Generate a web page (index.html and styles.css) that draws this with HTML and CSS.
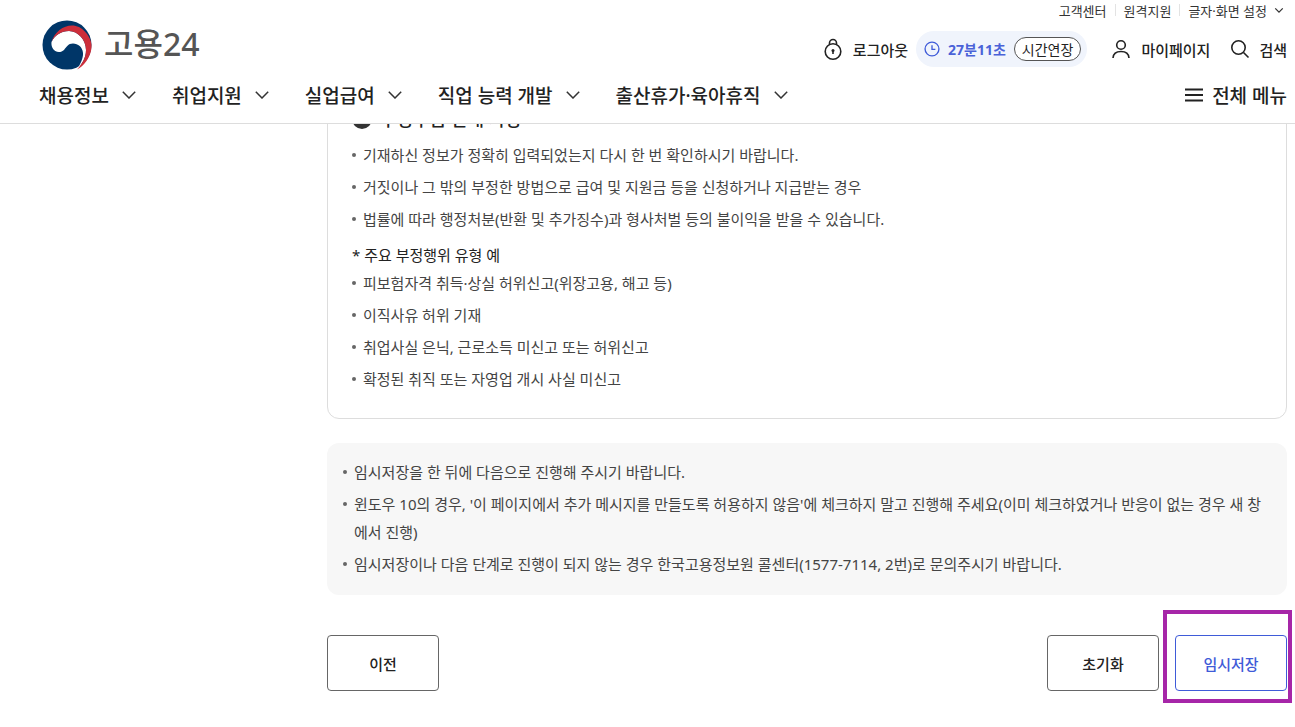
FILE: index.html
```html
<!DOCTYPE html>
<html lang="ko">
<head>
<meta charset="utf-8">
<title>고용24</title>
<link rel="stylesheet" href="styles.css">
</head>
<body>
<div class="page">
  <header class="header">
    <div class="util">
      <a>고객센터</a><i class="sep"></i><a>원격지원</a><i class="sep"></i><a>글자·화면 설정</a>
      <svg class="chev-s" viewBox="0 0 12 8"><path d="M1.500 1.500 6 6l4.500-4.500"/></svg>
    </div>
    <div class="brand-row">
      <div class="logo">
        <svg class="emblem" viewBox="0 0 50 50">
          <circle cx="25" cy="25" r="24.500" fill="#003668"/>
          <path d="M9.500 22C13 15 19 11 27 11c9 0 17 9 17 19 0 8-4 14-9 19.500 3-4.500 6.500-11.500 6-16.500-.5-6-5-9.500-10-9.500s-6.500 3.500-9 6.500c-3 3-9 3-11.500-2-1-2-1.200-4-1-6z" fill="#fff"/>
          <path d="M9.500 22C13 9 27 2 37 7c9 5 13 14 12.500 20-.5 10-7.500 19-14.500 22.500 5-5.500 9-11.500 9-19.500 0-10-8-19-17-19-8 0-14 4-17.500 11z" fill="#cd2e3a"/>
        </svg>
        <span class="logo-text">고용24</span>
      </div>
      <div class="actions">
        <a class="action">
          <svg class="icon" viewBox="0 0 20 24"><circle cx="10" cy="14.500" r="7.800"/><path d="M6.500 8V6a3.500 3.500 0 0 1 7 0v2"/><circle class="solid" cx="10" cy="13.500" r="1.500"/><path d="M10 14v3"/></svg>
          <span>로그아웃</span>
        </a>
        <div class="timer">
          <svg class="clock" viewBox="0 0 18 18"><circle cx="9" cy="9" r="7.800"/><path d="M9 4.800V9.500h3.800"/></svg>
          <b class="time">27분11초</b>
          <button class="extend">시간연장</button>
        </div>
        <a class="action me">
          <svg class="icon" viewBox="0 0 20 20"><circle cx="10" cy="6" r="4.300"/><path d="M2 19c.3-4.500 3.500-6.500 8-6.500s7.700 2 8 6.500"/></svg>
          <span>마이페이지</span>
        </a>
        <a class="action search">
          <svg class="icon" viewBox="0 0 20 20"><circle cx="8.500" cy="8.500" r="6.700"/><path d="m13.500 13.500 5 5"/></svg>
          <span>검색</span>
        </a>
      </div>
    </div>
    <nav class="nav">
      <ul class="nav-list">
        <li>채용정보<svg class="chev" viewBox="0 0 14 8"><path d="M.8.800 7 7l6.200-6.200"/></svg></li>
        <li>취업지원<svg class="chev" viewBox="0 0 14 8"><path d="M.8.800 7 7l6.200-6.200"/></svg></li>
        <li>실업급여<svg class="chev" viewBox="0 0 14 8"><path d="M.8.800 7 7l6.200-6.200"/></svg></li>
        <li>직업 능력 개발<svg class="chev" viewBox="0 0 14 8"><path d="M.8.800 7 7l6.200-6.200"/></svg></li>
        <li>출산휴가·육아휴직<svg class="chev" viewBox="0 0 14 8"><path d="M.8.800 7 7l6.200-6.200"/></svg></li>
      </ul>
      <div class="all-menu">
        <svg class="burger" viewBox="0 0 18 14"><path d="M0 1.500h18M0 7h18M0 12.500h18"/></svg>
        <span>전체 메뉴</span>
      </div>
    </nav>
  </header>
  <main class="main">
    <section class="notice-card">
      <h3 class="card-title"><i class="mark"></i>부정수급 안내 사항</h3>
      <ul class="bullets">
        <li>기재하신 정보가 정확히 입력되었는지 다시 한 번 확인하시기 바랍니다.</li>
        <li>거짓이나 그 밖의 부정한 방법으로 급여 및 지원금 등을 신청하거나 지급받는 경우</li>
        <li>법률에 따라 행정처분(반환 및 추가징수)과 형사처벌 등의 불이익을 받을 수 있습니다.</li>
      </ul>
      <p class="star">* 주요 부정행위 유형 예</p>
      <ul class="bullets">
        <li>피보험자격 취득·상실 허위신고(위장고용, 해고 등)</li>
        <li>이직사유 허위 기재</li>
        <li>취업사실 은닉, 근로소득 미신고 또는 허위신고</li>
        <li>확정된 취직 또는 자영업 개시 사실 미신고</li>
      </ul>
    </section>
    <section class="info-box">
      <ul class="bullets">
        <li>임시저장을 한 뒤에 다음으로 진행해 주시기 바랍니다.</li>
        <li>윈도우 10의 경우, '이 페이지에서 추가 메시지를 만들도록 허용하지 않음'에 체크하지 말고 진행해 주세요(이미 체크하였거나 반응이 없는 경우 새 창에서 진행)</li>
        <li>임시저장이나 다음 단계로 진행이 되지 않는 경우 한국고용정보원 콜센터(1577-7114, 2번)로 문의주시기 바랍니다.</li>
      </ul>
    </section>
    <div class="buttons">
      <button class="btn">이전</button>
      <div class="buttons-right">
        <button class="btn">초기화</button>
        <div class="highlight"><button class="btn primary">임시저장</button></div>
      </div>
    </div>
  </main>
</div>
</body>
</html>
```

FILE: styles.css
```css
* { box-sizing: border-box; }
html, body { margin: 0; height: 100%; overflow: hidden; background: #fff; }
body {
  font-family: "Noto Sans", "Noto Sans CJK KR", sans-serif;
  color: #222;
}
ul { list-style: none; margin: 0; padding: 0; }
a { color: inherit; text-decoration: none; }
svg { display: block; flex: none; }
button { font-family: inherit; cursor: pointer; }

.page { display: flex; flex-direction: column; width: 1295px; height: 727px; overflow: hidden; }

.header {
  position: relative;
  z-index: 2;
  flex: none;
  height: 124px;
  background: #fff;
  border-bottom: 1px solid #ddd;
  padding: 0 8px 0 38px;
}
.util {
  display: flex; align-items: center; justify-content: flex-end;
  height: 20px;
  padding-right: 3px;
  font-size: 13px;
  color: #333;
}
.sep { width: 1px; height: 12px; background: #e3e3e3; margin: 0 8px; }
.chev-s { width: 10px; height: 7px; margin-left: 7px; fill: none; stroke: #333; stroke-width: 1.500; }

.brand-row { display: flex; align-items: center; justify-content: space-between; height: 50px; }
.logo { display: flex; align-items: center; gap: 12px; margin-left: 4px; }
.emblem { width: 50px; height: 50px; }
.logo-text { font-size: 32px; font-weight: 500; color: #555; line-height: 1; margin-top: -2px; }

.actions { display: flex; align-items: center; margin-top: 8px; font-size: 15px; font-weight: 500; color: #222; }
.action { display: flex; align-items: center; gap: 10px; }
.icon { width: 20px; height: 24px; fill: none; stroke: #222; stroke-width: 1.600; }
.solid { fill: #222; stroke: none; }
.timer {
  display: flex; align-items: center;
  height: 36px;
  margin: 0 24px 0 8px;
  padding: 0 6px 0 8px;
  background: #f0f4fc;
  border-radius: 18px;
}
.clock { width: 16px; height: 16px; fill: none; stroke: #3f5bd8; stroke-width: 1.500; }
.time { margin-left: 8px; font-size: 14px; font-weight: 700; color: #4a62d8; }
.extend {
  margin-left: 8px;
  height: 24px;
  padding: 0 7px;
  font-size: 14px;
  color: #222;
  background: #fff;
  border: 1px solid #555;
  border-radius: 12px;
}
.me { margin-right: 20px; }
.search { gap: 9px; }

.nav { display: flex; align-items: center; justify-content: space-between; height: 53px; padding-bottom: 3px; }
.nav-list { display: flex; gap: 36px; margin-left: 1px; }
.nav-list li { display: flex; align-items: center; font-size: 19px; font-weight: 500; color: #222; }
.chev { width: 14px; height: 8px; margin-left: 13px; fill: none; stroke: #333; stroke-width: 1.500; }
.all-menu { display: flex; align-items: center; gap: 9px; font-size: 19px; font-weight: 500; color: #222; }
.burger { width: 18px; height: 14px; fill: none; stroke: #222; stroke-width: 2; }

.main { flex: 1; min-height: 0; padding: 0 8px 0 327px; }
.notice-card {
  margin-top: -34px;
  height: 329px;
  padding: 18px 24px 0;
  border: 1px solid #ddd;
  border-radius: 12px;
  background: #fff;
}
.card-title { display: flex; align-items: center; gap: 8px; margin: 0 0 12px; height: 20px; font-size: 18px; font-weight: 500; line-height: 1; }
.mark { width: 20px; height: 20px; border-radius: 50%; background: #333; }

.bullets li {
  position: relative;
  padding-left: 11px;
  font-size: 15px;
  line-height: 28px;
  color: #444;
}
.bullets li + li { margin-top: 4px; }
.bullets li::before {
  content: "";
  position: absolute;
  left: 0; top: 12px;
  width: 4px; height: 4px;
  border-radius: 50%;
  background: #666;
}
.star { margin: 10px 0 2px; font-size: 15px; line-height: 24px; color: #222; }

.info-box {
  margin-top: 24px;
  height: 152px;
  padding: 15px 16px 0;
  background: #f7f7f7;
  border-radius: 12px;
}
.buttons { display: flex; justify-content: space-between; margin-top: 40px; }
.buttons-right { display: flex; gap: 16px; }
.btn {
  display: block;
  width: 112px;
  height: 56px;
  font-size: 15px;
  font-weight: 500;
  color: #222;
  background: #fff;
  border: 1px solid #666;
  border-radius: 4px;
}
.primary { color: #3f5bd8; border-color: #3f5bd8; }
.highlight { position: relative; }
.highlight::after {
  content: "";
  position: absolute;
  inset: -25px -5px -12px -12px;
  border: 4px solid #a626a8;
  pointer-events: none;
}
```
